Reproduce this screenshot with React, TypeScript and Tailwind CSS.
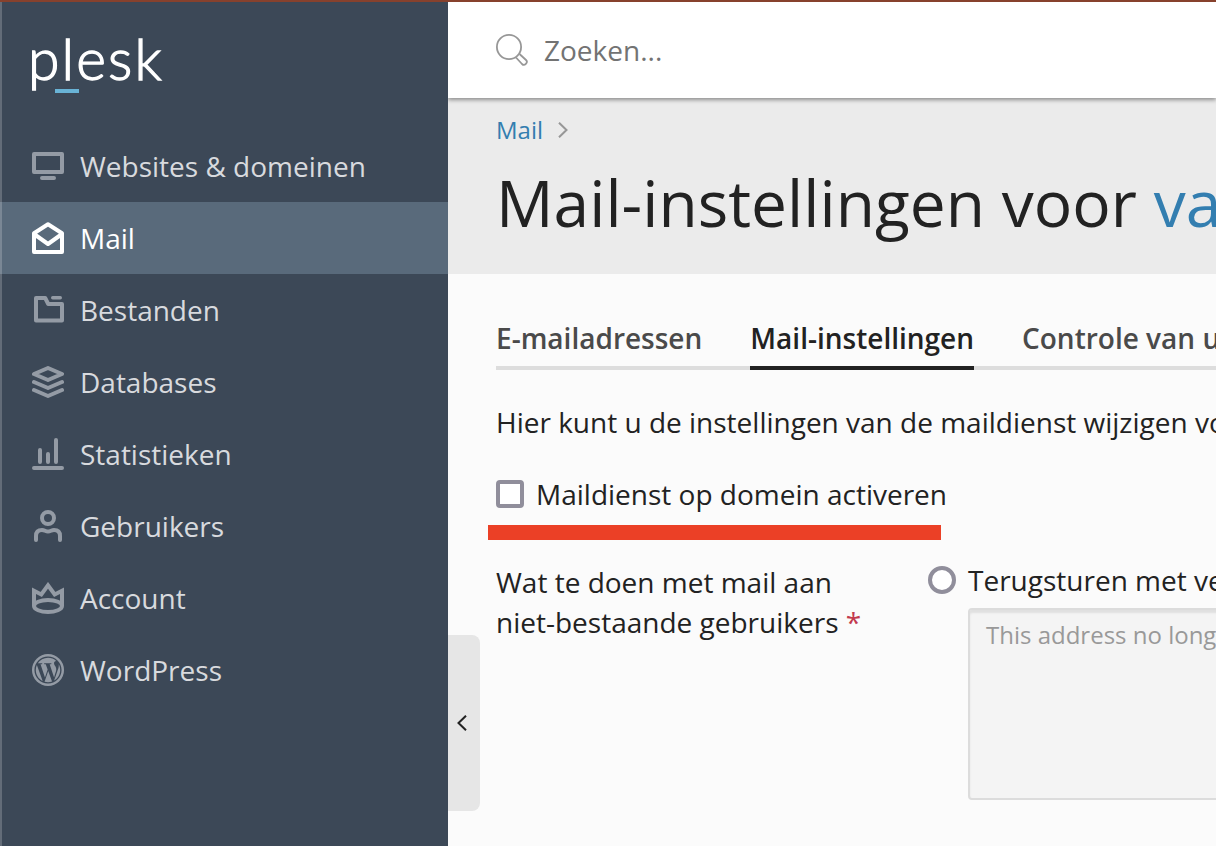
import type { ReactNode } from 'react';
import { FaWordpressSimple } from 'react-icons/fa';

function Icon({ children }: { children: ReactNode }) {
  return (
    <svg
      viewBox="0 0 32 32"
      className="size-8 shrink-0"
      fill="none"
      stroke="currentColor"
      strokeWidth="4"
      strokeLinejoin="round"
      strokeLinecap="round"
    >
      {children}
    </svg>
  );
}

const items: { label: string; active?: boolean; icon: ReactNode }[] = [
  {
    label: 'Websites & domeinen',
    icon: (
      <Icon>
        <path d="M2 4h28v18H2zM10 28h12" strokeLinejoin="round" />
      </Icon>
    ),
  },
  {
    label: 'Mail',
    active: true,
    icon: (
      <Icon>
        <path d="M2 11.2 16 2.3l14 8.9V30H2zM2 12l14 10 14-10" />
      </Icon>
    ),
  },
  {
    label: 'Bestanden',
    icon: (
      <Icon>
        <path d="M4 4h9.2l3 6H30v16.600H4z" />
        <path d="M20.700 3.700h7.600" strokeWidth="3.400" />
      </Icon>
    ),
  },
  {
    label: 'Databases',
    icon: (
      <Icon>
        <path d="M2 8l14-6 14 6-14 6zM2 16l14 6 14-6M2 24l14 6 14-6" />
      </Icon>
    ),
  },
  {
    label: 'Statistieken',
    icon: (
      <Icon>
        <path d="M2 30h28M8 12v12M16 16v8M24 2v22" />
      </Icon>
    ),
  },
  {
    label: 'Gebruikers',
    icon: (
      <Icon>
        <circle cx="16" cy="8" r="6" />
        <path d="M4 30v-4c0-4.500 2.500-6 6-6 2.500 0 3.500 1.600 6 1.600S19.500 20 22 20c3.500 0 6 1.500 6 6v4" />
      </Icon>
    ),
  },
  {
    label: 'Account',
    icon: (
      <Icon>
        <path
          d="M2 24V8.800l7.300 3.700L16 3.300l6.700 9.200L30 8.800V24"
          strokeLinejoin="miter"
          strokeLinecap="butt"
        />
        <ellipse cx="16" cy="24" rx="14" ry="6" />
      </Icon>
    ),
  },
  {
    label: 'WordPress',
    icon: (
      <span className="flex size-8 shrink-0 items-center justify-center rounded-full bg-current">
        <FaWordpressSimple className="size-7 text-[#3c4857]" />
      </span>
    ),
  },
];

function Sidebar() {
  return (
    <aside className="flex w-[448px] shrink-0 flex-col bg-[#3c4857]">
      <div className="h-32 pt-[22px] pl-7">
        <div className="relative w-fit font-['Lato',sans-serif] text-[57px] leading-[68px] font-light tracking-[2.1px] text-white [-webkit-text-stroke:1.3px_white]">
          plesk
          <span className="absolute top-[65px] left-[27px] h-1 w-6 bg-[#69b3d6]" />
        </div>
      </div>
      <nav className="flex flex-col">
        {items.map((item) => (
          <a
            key={item.label}
            className={
              item.active
                ? 'flex h-[72px] items-center gap-4 bg-[#596a7b] pl-8 text-white'
                : 'flex h-[72px] items-center gap-4 pl-8 text-[#949ba5]'
            }
          >
            {item.icon}
            <span className={item.active ? 'text-white' : 'text-[#d8dade]'}>{item.label}</span>
          </a>
        ))}
      </nav>
    </aside>
  );
}

function Tabs() {
  return (
    <div className="flex h-[62px] w-[900px] gap-12 border-b-4 border-[#dddddd] font-semibold text-[#4a4a4a]">
      <span className="pt-2.5">E-mailadressen</span>
      <span className="-mb-1 border-b-4 border-[#222222] pt-2.5 text-[#222222]">
        Mail-instellingen
      </span>
      <span className="pt-2.5">Controle van uitgaande e-mail</span>
    </div>
  );
}

export default function App() {
  return (
    <div className="relative flex h-[846px] w-[1216px] flex-col overflow-hidden border-t-2 border-[#87412d] bg-[#fbfbfb] font-['Open_Sans',sans-serif] text-[28px] leading-10 whitespace-nowrap text-[#222222]">
      <div className="flex min-h-0 flex-1">
        <Sidebar />
        <main className="min-w-0 flex-1 overflow-hidden">
          <header className="relative flex h-24 items-center gap-4 bg-white pl-12 text-[#737373] shadow-[0_2px_4px_rgba(0,0,0,0.4)]">
            <svg viewBox="0 0 32 32" className="size-8" fill="none" stroke="#979797" strokeWidth="1.8">
              <circle cx="13" cy="13" r="12.1" />
              <path d="M20 23.500l6 6.500c2.500 2.500 6.500-1.500 4-4L23.500 20" />
            </svg>
            <span>Zoeken...</span>
          </header>
          <section className="h-44 bg-[#ebebeb] pl-12">
            <div className="flex h-16 items-center gap-[15px] text-2xl text-[#337eb0]">
              <span>Mail</span>
              <svg viewBox="0 0 10 16" className="h-4 w-2.5" fill="none" stroke="#979797" strokeWidth="2">
                <path d="M1 .7 8.500 8 1 15.300" />
              </svg>
            </div>
            <h1 className="text-[64px] leading-[82px] tracking-[0.04px]">
              Mail-instellingen voor <span className="text-[#337eb0]">vandaag.nl</span>
            </h1>
          </section>
          <section className="pt-[34px] pl-12">
            <Tabs />
            <p className="pt-8">Hier kunt u de instellingen van de maildienst wijzigen voor het domein.</p>
            <label className="mt-8 flex items-center gap-3">
              <span className="size-7 rounded-[4px] border-4 border-[#908e9b] bg-white" />
              <span>Maildienst op domein activeren</span>
            </label>
            <div className="mt-[11px] -ml-2 h-[15px] w-[453px] bg-[#eb4026]" />
            <div className="flex pt-[22px]">
              <div className="w-[432px] shrink-0">
                Wat te doen met mail aan
                <br />
                niet-bestaande gebruikers <span className="text-[#c23a4e]">*</span>
              </div>
              <div>
                <label className="-mt-0.5 flex items-center gap-3">
                  <span className="size-7 rounded-full border-4 border-[#908e9b] bg-white" />
                  <span>Terugsturen met vermelding</span>
                </label>
                <div className="mt-2 ml-10 h-48 w-[500px] rounded-[4px] border-2 border-[#dcdcdc] bg-[#f4f4f4] px-4 pt-[5px] text-2xl leading-10 text-[#999999] shadow-[inset_0_3px_2px_#e0e0e0]">
                  This address no longer accepts mail.
                </div>
              </div>
            </div>
          </section>
        </main>
      </div>
      <button className="absolute top-[633px] left-[448px] flex h-44 w-8 items-center rounded-r-lg bg-[#e6e6e6] pl-[9px]">
        <svg viewBox="0 0 10 16" className="h-4 w-2.5" fill="none" stroke="#222222" strokeWidth="2">
          <path d="M9 .7 1.500 8 9 15.300" />
        </svg>
      </button>
      <div className="absolute top-0 left-0 h-[844px] w-0.5 bg-white/20" />
    </div>
  );
}
